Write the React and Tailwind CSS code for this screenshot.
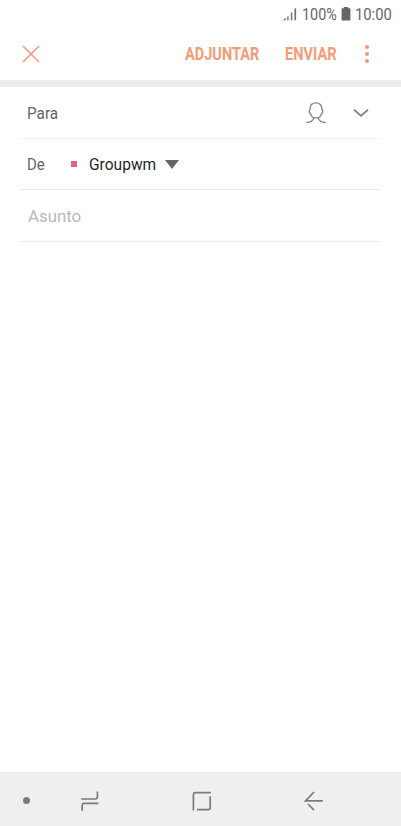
import React from 'react';

const StatusBar = () => (
  <div className="flex h-7 items-center text-[17px] leading-7 text-[#666666]">
    <svg className="ml-[282px] h-4 w-4 shrink-0" viewBox="0 0 16 16" fill="#727272">
      <path d="M.8 14.2L3.6 11.8v2.4z M5.2 10.7l1.4-1v4.5H5.2z M8.8 7l1.5-1v8.2H8.8z M12.4 3l1.7-1.3v12.5h-1.7z" />
    </svg>
    <span className="ml-[3.5px] w-[37.5px] shrink-0 whitespace-nowrap">
      <span className="inline-block origin-left scale-x-[0.845]">100%</span>
    </span>
    <svg className="ml-0.5 h-4 w-[11px] shrink-0" viewBox="0 0 11 16" fill="#666666">
      <path d="M2.8 1h4.4v1.3h2.2v12.2H.6V2.3h2.2z" />
    </svg>
    <span className="ml-[3px] w-10 shrink-0 whitespace-nowrap">
      <span className="inline-block origin-left scale-x-[0.87]">10:00</span>
    </span>
  </div>
);

const Toolbar = () => (
  <header className="flex h-[52px] items-center text-[17.5px] font-bold text-[#f59b77]">
    <button className="ml-[22px] h-[18px] w-[18px] shrink-0" aria-label="Cerrar">
      <svg className="h-[18px] w-[18px]" viewBox="0 0 18 18" fill="none" stroke="currentColor" strokeWidth="1.6">
        <path d="M1 1l16 16M17 1L1 17" />
      </svg>
    </button>
    <button className="ml-[144.5px] w-[75px] shrink-0 pt-px text-left whitespace-nowrap">
      <span className="inline-block origin-left scale-x-[0.83]">ADJUNTAR</span>
    </button>
    <button className="ml-[25.5px] w-[53px] shrink-0 pt-px text-left whitespace-nowrap">
      <span className="inline-block origin-left scale-x-[0.835]">ENVIAR</span>
    </button>
    <button className="ml-[26.5px] flex flex-col gap-[3px]" aria-label="Más opciones">
      <span className="h-1 w-1 rounded-full bg-[#f59873]" />
      <span className="h-1 w-1 rounded-full bg-[#f59873]" />
      <span className="h-1 w-1 rounded-full bg-[#f59873]" />
    </button>
  </header>
);

const ComposeForm = () => (
  <main className="flex-1 pr-[21px] pl-5 text-[17px]">
    <div className="flex h-[52px] items-center border-b border-[#f0f0f0] pl-[7px] text-[#666666]">
      <span className="w-[279px] shrink-0 pt-0.5">
        <span className="inline-block origin-left scale-x-[0.9]">Para</span>
      </span>
      <svg className="h-[22px] w-5 shrink-0" viewBox="0 0 20 22" fill="none" stroke="#858585" strokeWidth="1.4" strokeLinecap="round" strokeLinejoin="round">
        <path d="M10 .9C6.2.9 4.2 3.2 4.2 6.4c0 1-1 1.6-.9 3 .1 1.6.8 2.5 1.6 3.3.6 1.6 1.6 2.7 3 3.2h4.2c1.4-.5 2.4-1.6 3-3.2.8-.8 1.5-1.7 1.6-3.3.1-1.4-.9-2-.9-3C15.8 3.2 13.8.9 10 .9z" />
        <path d="M7.9 15.9c-.9 2.8-3.4 4.4-7 4.6M12.1 15.9c.9 2.8 3.4 4.4 7 4.6" />
      </svg>
      <svg className="ml-[27px] h-4 w-4 shrink-0" viewBox="0 0 16 16" fill="none" stroke="#858585" strokeWidth="1.8">
        <path d="M1 4.8L8 10.8l7-6" />
      </svg>
    </div>
    <div className="flex h-[51px] items-center border-b border-[#eaeaea] pl-[7px]">
      <span className="w-11 shrink-0 pt-px text-[#666666]">
        <span className="inline-block origin-left scale-x-[0.88]">De</span>
      </span>
      <span className="h-1.5 w-1.5 bg-[#dc6390]" />
      <span className="ml-3 w-[69px] shrink-0 pt-px text-[#252525]">
        <span className="inline-block origin-left scale-x-[0.915]">Groupwm</span>
      </span>
      <svg className="ml-[7px] h-[9px] w-[14px]" viewBox="0 0 14 9" fill="#636363">
        <path d="M0 0h14L7 9z" />
      </svg>
    </div>
    <div className="flex h-[52px] items-center border-b border-[#eaeaea] pt-0.5 pl-2 text-[#b8b8b8]">
      <span className="inline-block origin-left scale-x-[0.99]">Asunto</span>
    </div>
  </main>
);

const NavigationBar = () => (
  <nav className="flex h-[54px] items-center bg-[#efefef] pt-[3px] text-[#7b7b7b]">
    <span className="ml-[23px] h-[7px] w-[7px] rounded-full bg-[#7b7b7b]" />
    <svg className="ml-[50px] h-5 w-5" viewBox="0 0 20 20" fill="none" stroke="currentColor" strokeWidth="1.7">
      <path d="M1.2 8h14c1.4 0 2.2-.8 2.2-2.2V.4M18.4 12.4H4.4c-1.4 0-2.2.8-2.2 2.2v5.2" />
    </svg>
    <svg className="ml-[92px] h-5 w-5" viewBox="0 0 20 20" fill="none" stroke="currentColor" strokeWidth="1.7">
      <path d="M1.4 19.5V3.8c0-1.4.8-2.2 2.2-2.2H18.8M5 18.7h11c1.4 0 2.2-.8 2.2-2.2V5.2" />
    </svg>
    <svg className="ml-[92px] h-5 w-5" viewBox="0 0 20 20" fill="none" stroke="currentColor" strokeWidth="1.7">
      <path d="M10 1L1.6 9.8h17.2M4 13l6 6.2" />
    </svg>
  </nav>
);

const App = () => {
  return (
    <div className="flex h-[826px] w-[401px] flex-col overflow-hidden bg-white font-[Roboto,sans-serif]">
      <StatusBar />
      <Toolbar />
      <div className="h-[7px] shrink-0 bg-[#ededed]" />
      <ComposeForm />
      <NavigationBar />
    </div>
  );
};

export default App;
